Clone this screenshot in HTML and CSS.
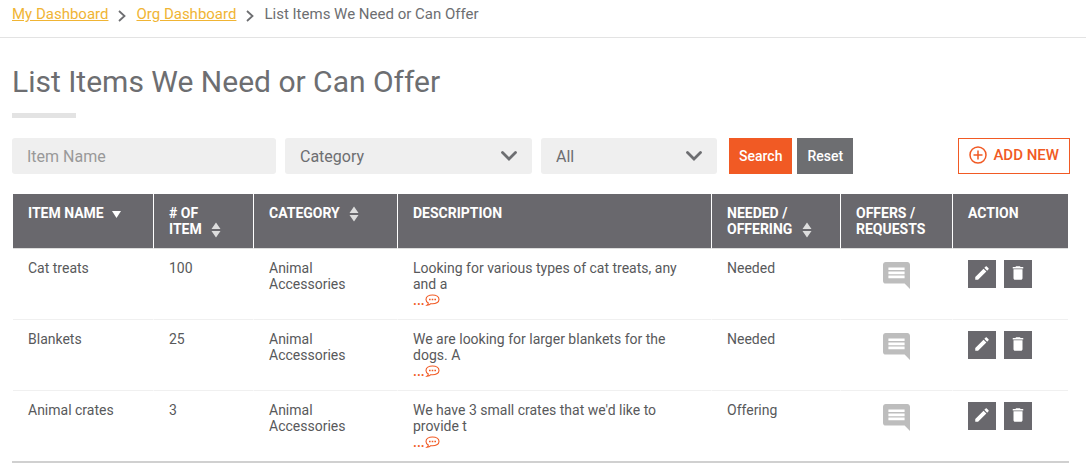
FILE: index.html
```
<!DOCTYPE html>
<html lang="en">
<head>
  <meta charset="UTF-8">
  <meta name="viewport" content="width=device-width, initial-scale=1.0">
  <title>List Items We Need or Can Offer</title>
  <link rel="stylesheet" href="styles.css">
</head>
<body>
  <!-- shared icons -->
  <svg class="sprite" xmlns="http://www.w3.org/2000/svg">
    <symbol id="icon-sort" viewBox="0 0 10 16">
      <path d="M5 0.5L9.5 7H0.5z M5 15.5L0.5 9H9.5z"></path>
    </symbol>
    <symbol id="icon-chevron" viewBox="0 0 8 14">
      <path d="M1 2l5.5 5L1 12" fill="none" stroke="currentColor" stroke-width="1.8"></path>
    </symbol>
    <symbol id="icon-bubble" viewBox="0 0 15 13">
      <path d="M7.5 1C3.8 1 1 2.8 1 5.4c0 1.5 .9 2.7 2.3 3.5c0 1-.5 1.8-1.3 2.4c1.7-.1 3-.7 3.9-1.6c5 .6 8.1-1.5 8.1-4.3C14 2.8 11.2 1 7.5 1z" fill="none" stroke="currentColor" stroke-width="1.1"></path>
      <path d="M4 4.7h1.6v1.5H4zM6.7 4.7h1.6v1.5H6.7zM9.4 4.7h1.6v1.5H9.4z"></path>
    </symbol>
    <symbol id="icon-comment" viewBox="2 2 20 20">
      <path d="M21.99 4c0-1.1-.89-2-1.99-2H4c-1.1 0-2 .9-2 2v12c0 1.1.9 2 2 2h14l4 4-.01-18zM18 14H6v-2h12v2zm0-3H6V9h12v2zm0-3H6V6h12v2z"></path>
    </symbol>
    <symbol id="icon-edit" viewBox="0 0 24 24">
      <path d="M3 17.25V21h3.75L17.81 9.94l-3.75-3.75L3 17.25zM20.71 7.04c.39-.39.39-1.02 0-1.41l-2.34-2.34c-.39-.39-1.02-.39-1.41 0l-1.83 1.83 3.75 3.75 1.83-1.83z"></path>
    </symbol>
    <symbol id="icon-delete" viewBox="0 0 24 24">
      <path d="M6 19c0 1.1.9 2 2 2h8c1.1 0 2-.9 2-2V7H6v12zM19 4h-3.5l-1-1h-5l-1 1H5v2h14V4z"></path>
    </symbol>
  </svg>

  <nav class="breadcrumb" aria-label="Breadcrumb">
    <a href="#">My Dashboard</a>
    <svg class="crumb-sep"><use href="#icon-chevron"></use></svg>
    <a href="#">Org Dashboard</a>
    <svg class="crumb-sep"><use href="#icon-chevron"></use></svg>
    <span>List Items We Need or Can Offer</span>
  </nav>

  <main class="container">
    <h1 class="page-title">List Items We Need or Can Offer</h1>

    <form class="filters">
      <input class="field field-name" type="text" placeholder="Item Name" aria-label="Item Name">
      <select class="field field-category" aria-label="Category">
        <option>Category</option>
        <option>Animal Accessories</option>
      </select>
      <select class="field field-type" aria-label="Needed or offering">
        <option>All</option>
        <option>Needed</option>
        <option>Offering</option>
      </select>
      <div class="filter-buttons">
        <button type="submit" class="btn btn-search">Search</button>
        <button type="reset" class="btn btn-reset">Reset</button>
      </div>
      <button type="button" class="btn-add">
        <svg class="add-icon" viewBox="0 0 18 18">
          <circle cx="9" cy="9" r="8"></circle>
          <path d="M9 4.5v9M4.5 9h9"></path>
        </svg>
        ADD NEW
      </button>
    </form>

    <div class="table-wrap">
      <table class="items">
        <colgroup>
          <col class="col-name">
          <col class="col-count">
          <col class="col-category">
          <col>
          <col class="col-needed">
          <col class="col-offers">
          <col class="col-action">
        </colgroup>
        <thead>
          <tr>
            <th scope="col">ITEM NAME <svg class="sorted" viewBox="0 0 9 7"><path d="M0 0h9L4.5 7z"></path></svg></th>
            <th scope="col"># OF<br>ITEM <svg class="sort"><use href="#icon-sort"></use></svg></th>
            <th scope="col">CATEGORY <svg class="sort"><use href="#icon-sort"></use></svg></th>
            <th scope="col">DESCRIPTION</th>
            <th scope="col">NEEDED /<br>OFFERING <svg class="sort"><use href="#icon-sort"></use></svg></th>
            <th scope="col">OFFERS / REQUESTS</th>
            <th scope="col">ACTION</th>
          </tr>
        </thead>
        <tbody>
          <tr>
            <td>Cat treats</td>
            <td>100</td>
            <td>Animal Accessories</td>
            <td>Looking for various types of cat treats, any and a
              <a class="more" href="#" aria-label="Read more">...<svg class="bubble"><use href="#icon-bubble"></use></svg></a>
            </td>
            <td>Needed</td>
            <td class="offers"><a href="#" aria-label="Offers"><svg class="comment"><use href="#icon-comment"></use></svg></a></td>
            <td>
              <div class="actions">
                <button type="button" class="action" aria-label="Edit"><svg><use href="#icon-edit"></use></svg></button>
                <button type="button" class="action" aria-label="Delete"><svg><use href="#icon-delete"></use></svg></button>
              </div>
            </td>
          </tr>
          <tr>
            <td>Blankets</td>
            <td>25</td>
            <td>Animal Accessories</td>
            <td>We are looking for larger blankets for the dogs. A
              <a class="more" href="#" aria-label="Read more">...<svg class="bubble"><use href="#icon-bubble"></use></svg></a>
            </td>
            <td>Needed</td>
            <td class="offers"><a href="#" aria-label="Offers"><svg class="comment"><use href="#icon-comment"></use></svg></a></td>
            <td>
              <div class="actions">
                <button type="button" class="action" aria-label="Edit"><svg><use href="#icon-edit"></use></svg></button>
                <button type="button" class="action" aria-label="Delete"><svg><use href="#icon-delete"></use></svg></button>
              </div>
            </td>
          </tr>
          <tr>
            <td>Animal crates</td>
            <td>3</td>
            <td>Animal Accessories</td>
            <td>We have 3 small crates that we'd like to provide t
              <a class="more" href="#" aria-label="Read more">...<svg class="bubble"><use href="#icon-bubble"></use></svg></a>
            </td>
            <td>Offering</td>
            <td class="offers"><a href="#" aria-label="Offers"><svg class="comment"><use href="#icon-comment"></use></svg></a></td>
            <td>
              <div class="actions">
                <button type="button" class="action" aria-label="Edit"><svg><use href="#icon-edit"></use></svg></button>
                <button type="button" class="action" aria-label="Delete"><svg><use href="#icon-delete"></use></svg></button>
              </div>
            </td>
          </tr>
        </tbody>
      </table>
    </div>
  </main>
</body>
</html>
```
FILE: styles.css
```
* {
  margin: 0;
  padding: 0;
  box-sizing: border-box;
}

body {
  font-family: Roboto, Arial, sans-serif;
  font-size: 14px;
  line-height: 16px;
  color: #58595b;
  background: #fff;
}

svg {
  fill: currentColor;
}

.sprite {
  display: none;
}

button,
input,
select {
  font-family: inherit;
}

button {
  cursor: pointer;
}

.breadcrumb {
  display: flex;
  align-items: center;
  gap: 10px;
  padding: 4px 12px 13px;
  border-bottom: 1px solid #e3e3e3;
  font-size: 15px;
  line-height: 20px;
  color: #6d6e71;
}

.breadcrumb a {
  color: #f0b434;
}

.crumb-sep {
  width: 8px;
  height: 14px;
  margin-top: 4px;
}

.container {
  padding: 24px 16px 0 12px;
}

.page-title {
  font-size: 30px;
  line-height: 40px;
  font-weight: 400;
  color: #6d6e71;
}

.page-title::after {
  content: "";
  display: block;
  width: 64px;
  height: 5px;
  margin-top: 11px;
  background: #e3e3e3;
}

.filters {
  display: flex;
  gap: 9px;
  margin: 20px 0;
}

.field {
  height: 36px;
  padding: 0 15px;
  border: none;
  border-radius: 3px;
  background-color: #efefef;
  font-size: 16px;
  color: #6d6e71;
}

.field::placeholder {
  color: #999;
}

.field-name {
  width: 264px;
}

select.field {
  appearance: none;
  background-image: url("data:image/svg+xml,%3Csvg xmlns='http://www.w3.org/2000/svg' viewBox='0 0 16 10'%3E%3Cpath d='M1.500 1.500L8 8l6.500-6.500' fill='none' stroke='%236d6e71' stroke-width='2.800' stroke-linecap='round'/%3E%3C/svg%3E");
  background-repeat: no-repeat;
  background-position: right 15px center;
  background-size: 16px 10px;
}

.field-category {
  width: 247px;
}

.field-type {
  width: 176px;
}

.filter-buttons {
  display: flex;
  gap: 5px;
  margin-left: 3px;
}

.btn {
  height: 36px;
  padding: 0 10px;
  border: none;
  font-size: 14px;
  font-weight: 500;
  color: #fff;
}

.btn-search {
  background: #f15a24;
}

.btn-reset {
  background: #6d6e71;
}

.btn-add {
  display: flex;
  align-items: center;
  gap: 6px;
  height: 36px;
  margin-left: auto;
  padding: 0 10px 2px;
  border: 1px solid #f15a24;
  background: #fff;
  font-size: 15px;
  font-weight: 500;
  color: #f15a24;
}

.add-icon {
  width: 18px;
  height: 18px;
  fill: none;
  stroke: currentColor;
  stroke-width: 1.5;
}

.table-wrap {
  margin-right: 1px;
  padding: 0 1px;
  border-bottom: 2px solid #d0d0d0;
}

.items {
  width: 100%;
  table-layout: fixed;
  border-collapse: separate;
  border-spacing: 0;
}

.col-name {
  width: 141px;
}

.col-count {
  width: 100px;
}

.col-category {
  width: 144px;
}

.col-needed {
  width: 129px;
}

.col-offers {
  width: 112px;
}

.col-action {
  width: 115px;
}

.items th,
.items td {
  padding: 11px 15px;
  border-right: 1px solid #fff;
  border-bottom: 1px solid #f0f0f0;
  text-align: left;
  vertical-align: top;
}

.items td {
  padding-right: 30px;
}

.items th:last-child,
.items td:last-child {
  border-right: none;
}

.items th {
  border-bottom-color: #ddd;
  background: #69686d;
  background-clip: padding-box;
  font-weight: 700;
  color: #fff;
}

.items tbody tr:last-child td {
  border-bottom: none;
}

.sorted {
  width: 9px;
  height: 7px;
  margin-left: 5px;
}

.sort {
  width: 10px;
  height: 16px;
  margin: -2px 0 -2px 6px;
  vertical-align: middle;
  color: #ddd;
}

.more {
  display: flex;
  align-items: center;
  font-weight: 500;
  color: #f15a24;
  text-decoration: none;
}

.bubble {
  width: 15px;
  height: 13px;
}

.items .offers {
  padding-right: 15px;
  text-align: center;
}

.comment {
  width: 27px;
  height: 27px;
  margin-top: 2px;
  color: #bdbdbd;
}

.items td:last-child {
  padding-right: 15px;
}

.actions {
  display: flex;
  gap: 8px;
}

.action {
  display: flex;
  align-items: center;
  justify-content: center;
  width: 28px;
  height: 28px;
  padding-bottom: 2px;
  border: none;
  background: #69686d;
  color: #fff;
}

.action svg {
  width: 18px;
  height: 18px;
}
```
